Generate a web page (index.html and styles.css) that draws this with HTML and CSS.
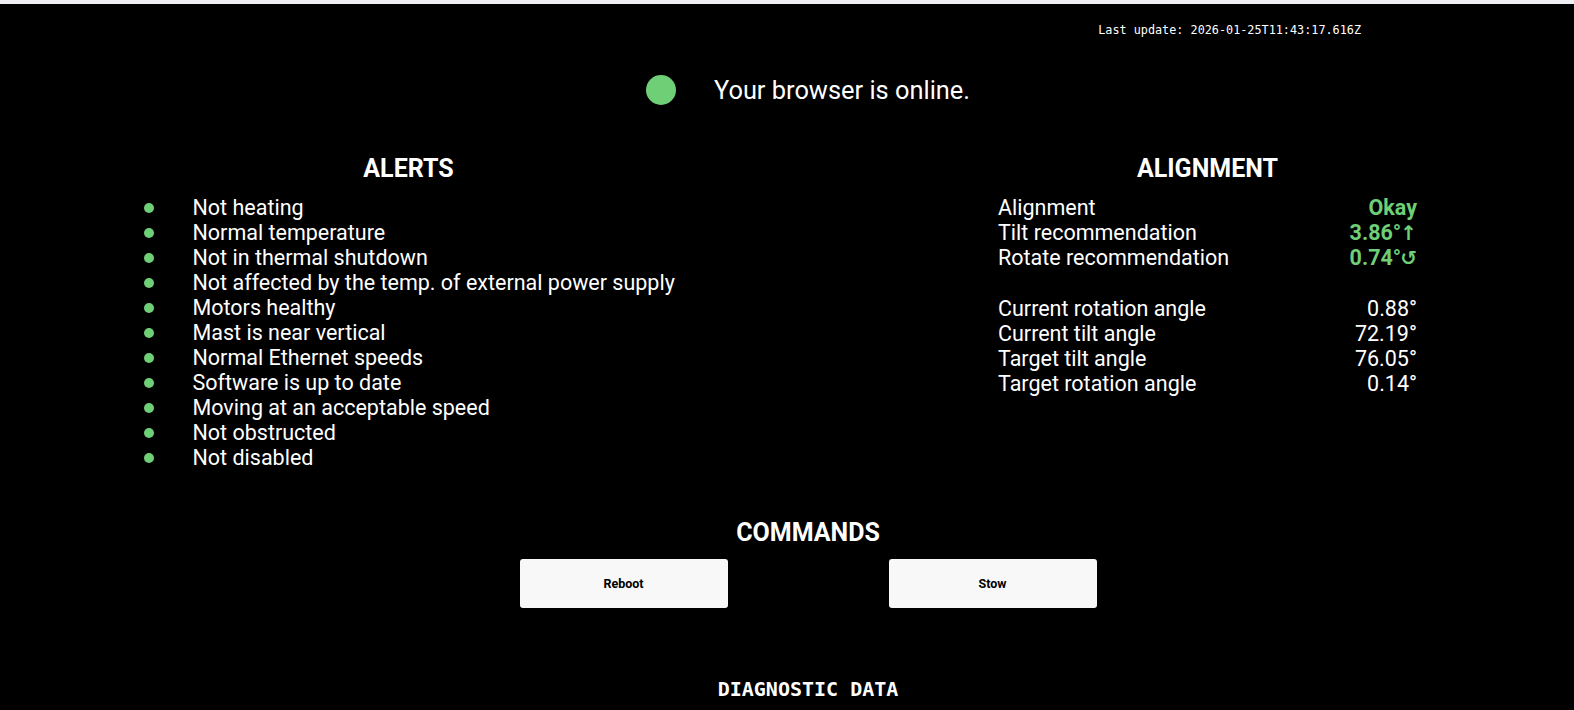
FILE: index.html
```html
<!DOCTYPE html>
<html>
<head>
    <title>Starlink Diagnostics</title>
    <link rel="stylesheet" href="styles.css">
</head>
<body>
    <div class="topline"></div>
    <div class="page">
        <div class="last-update">Last update: 2026-01-25T11:43:17.616Z</div>

        <div class="online">
            <span class="online-dot"></span>
            <span class="online-text">Your browser is online.</span>
        </div>

        <div class="columns">
            <div class="column">
                <h2>ALERTS</h2>
                <ul class="alerts">
                    <li><span class="dot"></span>Not heating</li>
                    <li><span class="dot"></span>Normal temperature</li>
                    <li><span class="dot"></span>Not in thermal shutdown</li>
                    <li><span class="dot"></span>Not affected by the temp. of external power supply</li>
                    <li><span class="dot"></span>Motors healthy</li>
                    <li><span class="dot"></span>Mast is near vertical</li>
                    <li><span class="dot"></span>Normal Ethernet speeds</li>
                    <li><span class="dot"></span>Software is up to date</li>
                    <li><span class="dot"></span>Moving at an acceptable speed</li>
                    <li><span class="dot"></span>Not obstructed</li>
                    <li><span class="dot"></span>Not disabled</li>
                </ul>
            </div>
            <div class="column">
                <h2>ALIGNMENT</h2>
                <div class="align-table">
                    <div class="row"><span>Alignment</span><span class="good">Okay</span></div>
                    <div class="row"><span>Tilt recommendation</span><span class="good">3.86°<span class="arrow">↑</span></span></div>
                    <div class="row"><span>Rotate recommendation</span><span class="good">0.74°<span class="arrow">↺</span></span></div>
                    <div class="row spacer"></div>
                    <div class="row"><span>Current rotation angle</span><span>0.88°</span></div>
                    <div class="row"><span>Current tilt angle</span><span>72.19°</span></div>
                    <div class="row"><span>Target tilt angle</span><span>76.05°</span></div>
                    <div class="row"><span>Target rotation angle</span><span>0.14°</span></div>
                </div>
            </div>
        </div>

        <div class="commands">
            <h2>COMMANDS</h2>
            <div class="command-buttons">
                <button>Reboot</button>
                <button>Stow</button>
            </div>
        </div>

        <div class="diagnostic">DIAGNOSTIC DATA</div>
    </div>
</body>
</html>
```

FILE: styles.css
```css
html {
    background-color: #f0f0f4;
}

body {
    margin: 0;
    padding: 0;
    font-family: Roboto, "Noto Sans", sans-serif;
    color: #fff;
    background-color: #f0f0f4;
}

.topline {
    height: 4px;
}

.page {
    background-color: #000;
    min-height: 706px;
    padding-left: 42px;
    overflow: hidden;
}

.last-update {
    font-family: "DejaVu Sans Mono", monospace;
    font-size: 11.8px;
    line-height: 16px;
    text-align: right;
    padding-top: 18px;
    padding-right: 213px;
}

.online {
    display: flex;
    justify-content: center;
    align-items: center;
    height: 30px;
    margin-top: 37px;
}

.online-dot {
    width: 30px;
    height: 30px;
    border-radius: 50%;
    background-color: #6fcf77;
    margin-right: 38px;
}

.online-text {
    font-size: 25.4px;
}

.columns {
    display: grid;
    grid-template-columns: 1fr 1fr;
    column-gap: 66px;
    margin-top: 49px;
}

h2 {
    font-size: 25px;
    line-height: 30px;
    font-weight: bold;
    text-align: center;
    margin: 0 0 11px 0;
}

.alerts {
    list-style: none;
    padding: 0;
    margin: 0 auto;
    width: 530px;
}

.alerts li {
    display: flex;
    align-items: center;
    font-size: 21.5px;
    line-height: 25px;
    white-space: nowrap;
}

.dot {
    width: 10px;
    height: 10px;
    border-radius: 50%;
    background-color: #6fcf77;
    margin-right: 39px;
    flex-shrink: 0;
}

.align-table {
    width: 419px;
    margin: 0 auto;
}

.row {
    display: flex;
    justify-content: space-between;
    font-size: 21.5px;
    line-height: 25px;
    height: 25px;
    white-space: nowrap;
}

.row.spacer {
    height: 26px;
}

.good {
    color: #6fcf77;
    font-weight: bold;
}

.arrow {
    font-family: "DejaVu Sans", sans-serif;
    font-weight: bold;
    font-size: 20px;
    margin-left: -1px;
}

.commands {
    margin-top: 48px;
}

.command-buttons {
    display: flex;
    justify-content: center;
    gap: 161px;
    margin-top: 11px;
}

.command-buttons button {
    width: 208px;
    height: 49px;
    background-color: #f8f8f8;
    border: none;
    border-radius: 3px;
    font-family: Roboto, sans-serif;
    font-weight: bold;
    font-size: 12.5px;
    color: #000;
}

.diagnostic {
    font-family: "DejaVu Sans Mono", monospace;
    font-weight: bold;
    font-size: 20px;
    line-height: 24px;
    text-align: center;
    margin-top: 69px;
}
```
